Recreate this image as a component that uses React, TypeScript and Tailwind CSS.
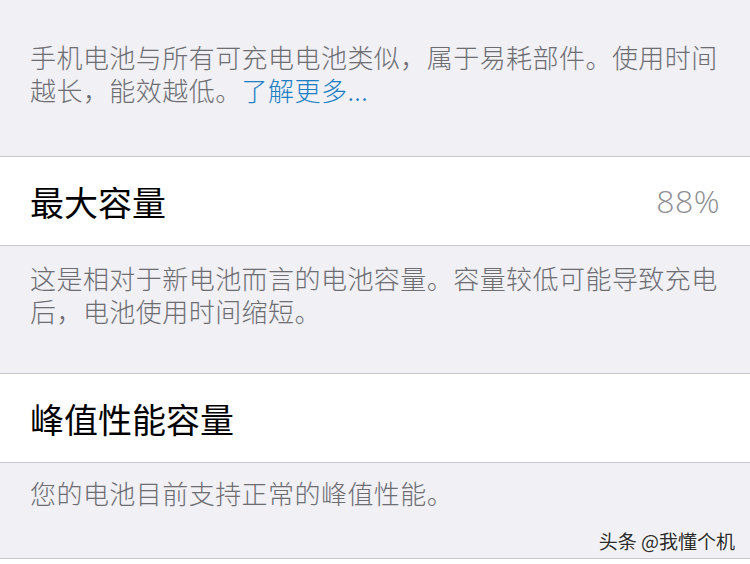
import React from 'react';

const font = { fontFamily: '"Noto Sans CJK SC", "Noto Sans", sans-serif' };

function Note({ children, className = '' }: { children: React.ReactNode; className?: string }) {
  return (
    <p className={`px-[30px] text-[26px] leading-[33px] tracking-[0.45px] font-light text-[#6d6d72] ${className}`}>
      {children}
    </p>
  );
}

function Row({ title, value }: { title: string; value?: string }) {
  return (
    <div className="flex h-[89px] items-center justify-between bg-white px-[30px] border-b border-[#c8c7cc]">
      <span className="text-[34px] text-black">{title}</span>
      {value && (
        <span
          className="text-[32px] font-light text-[#8e8e93] tracking-[0.5px]"
          style={{ fontFamily: '"Open Sans", "Liberation Sans", sans-serif' }}
        >
          {value}
        </span>
      )}
    </div>
  );
}

export default function App(): React.ReactNode {
  return (
    <div className="relative h-[564px] w-[750px] overflow-hidden bg-white" style={font}>
      <div className="h-[157px] bg-[#f0f0f5] pt-[40px] border-b border-[#c8c7cc]">
        <Note>
          手机电池与所有可充电电池类似，属于易耗部件。使用时间越长，能效越低。
          <span className="text-[#1c7fc4]">了解更多...</span>
        </Note>
      </div>

      <Row title="最大容量" value="88%" />

      <div className="h-[128px] bg-[#f0f0f5] pt-[15px] border-b border-[#c8c7cc]">
        <Note>这是相对于新电池而言的电池容量。容量较低可能导致充电后，电池使用时间缩短。</Note>
      </div>

      <Row title="峰值性能容量" />

      <div className="relative h-[96px] bg-[#f0f0f5] pt-[13px] border-b border-[#c8c7cc]">
        <Note>您的电池目前支持正常的峰值性能。</Note>
        <span
          className="absolute right-[15px] bottom-[3px] text-[19px] text-[#2b2b2b]"
          style={{ textShadow: '0 0 2px #fff, 0 0 2px #fff' }}
        >
          头条 @我懂个机
        </span>
      </div>
    </div>
  );
}
